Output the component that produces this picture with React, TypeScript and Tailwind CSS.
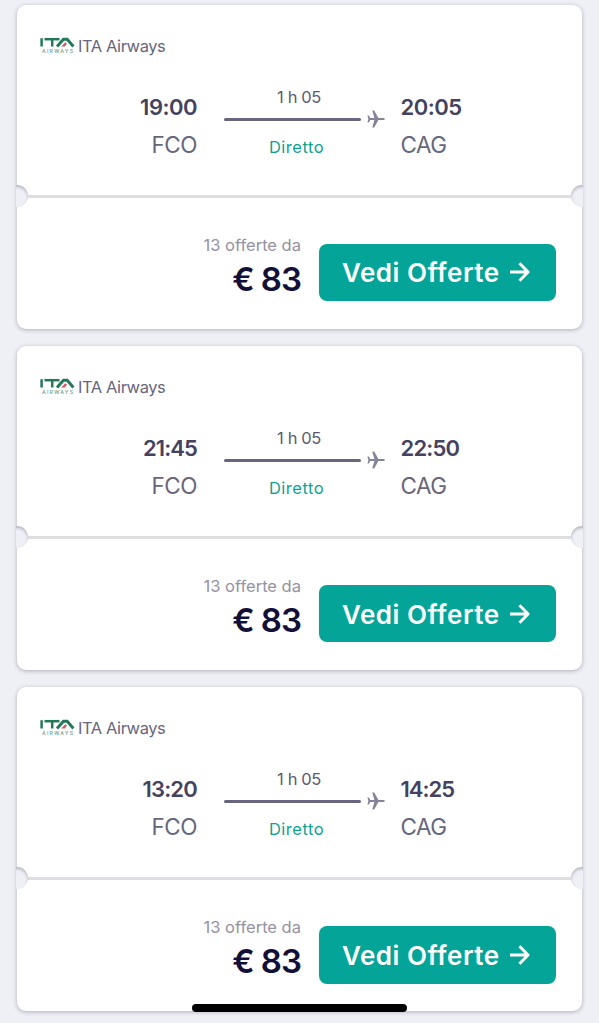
import React from 'react';

const flights = [
  { id: 1, departure: '19:00', arrival: '20:05', departureSpacing: 'tracking-[-0.5px]', arrivalSpacing: 'tracking-[-0.5px]' },
  { id: 2, departure: '21:45', arrival: '22:50', departureSpacing: 'tracking-[-0.9px]', arrivalSpacing: 'tracking-[-0.8px]' },
  { id: 3, departure: '13:20', arrival: '14:25', departureSpacing: 'tracking-[-0.8px]', arrivalSpacing: 'tracking-[-1px]' },
];

function ItaLogo() {
  return (
    <svg width="36" height="17" viewBox="0 0 36 17" className="shrink-0">
      <g fill="none" stroke="#23785a" strokeWidth="2.5">
        <path d="M2.6 1.2V9.5" />
        <path d="M5.5 2.2H20.5" />
        <path d="M13.2 2.5V9.5" />
        <path d="M18 9.5L24.5 2.2H28.2L34.4 9.5" strokeWidth="2.9" />
      </g>
      <path d="M22.3 9.5L26.3 5.3L28 6.5L25.8 9.5Z" fill="#d9545c" />
      <text x="3" y="16" textLength="31" fontSize="5.2" fontWeight="500" fill="#6aa08d" fontFamily="Inter, sans-serif">
        AIRWAYS
      </text>
    </svg>
  );
}

function Plane() {
  return (
    <svg width="18" height="18" viewBox="0 0 18 18" className="shrink-0" fill="#85839a">
      <path d="M17.8 9c0-.7-.6-1-1.4-1h-5L7.2.5H5.3L7.4 8H3.3L1.8 5.6H.4L1.4 9 .4 12.4h1.4L3.3 10h4.1l-2.1 7.5h1.9L11.4 10h5c.8 0 1.4-.3 1.4-1Z" />
    </svg>
  );
}

function Notch({ side }: { side: 'left' | 'right' }) {
  return (
    <div className={`absolute -top-[10px] h-[22px] w-[12px] overflow-hidden ${side === 'left' ? '-left-px' : '-right-px'}`}>
      <div
        className={`h-[22px] w-[22px] rounded-full bg-[#eff0f6] shadow-[inset_0_2px_3px_rgba(60,60,80,0.32)] ${
          side === 'left' ? '-ml-[10px]' : ''
        }`}
      />
    </div>
  );
}

type Flight = (typeof flights)[number];

function FlightCard({ flight }: { flight: Flight }) {
  return (
    <article className="h-[324px] shrink-0 rounded-[9px] bg-white shadow-[0_1px_4px_rgba(50,50,70,0.35)]">
      <div className="h-[190px] pt-[30.5px]">
        <div className="flex h-5 items-center gap-[3px] pl-[22px]">
          <ItaLogo />
          <span className="text-[16.5px] leading-5 tracking-[-0.42px] whitespace-nowrap text-[#68667c]">ITA Airways</span>
        </div>

        <div className="mt-[31.5px] flex h-[80px]">
          <div className="w-[180px] pt-[5px] text-right">
            <div className={`text-[22px] leading-[30px] font-semibold text-[#444260] ${flight.departureSpacing}`}>{flight.departure}</div>
            <div className="mt-[8px] text-[22.5px] leading-[30px] tracking-[-0.5px] text-[#68667c]">FCO</div>
          </div>
          <div className="ml-[26.5px] w-[161.5px]">
            <div className="w-[151px] text-center text-[16.5px] leading-[20px] tracking-[-0.4px] text-[#5b5971]">1 h 05</div>
            <div className="mt-[3px] flex h-[18px] items-center gap-[6px]">
              <div className="h-[3px] w-[137.5px] rounded-full bg-[#68667f]" />
              <Plane />
            </div>
            <div className="mt-[9px] w-[146px] text-center text-[16.5px] leading-[20px] tracking-[0.5px] text-[#0da391]">Diretto</div>
          </div>
          <div className="ml-[15.5px] pt-[5px]">
            <div className={`text-[22px] leading-[30px] font-semibold text-[#444260] ${flight.arrivalSpacing}`}>{flight.arrival}</div>
            <div className="mt-[8px] text-[22.5px] leading-[30px] tracking-[-0.5px] text-[#68667c]">CAG</div>
          </div>
        </div>
      </div>

      <div className="relative h-[3px] bg-[#dddde2]">
        <Notch side="left" />
        <Notch side="right" />
      </div>

      <div className="flex justify-end gap-[18px] pt-[37px] pr-[26.5px]">
        <div className="text-right whitespace-nowrap">
          <div className="text-[16.5px] leading-5 text-[#9492a3]">13 offerte da</div>
          <div className="text-[33px] leading-[48px] font-semibold tracking-[-1px] text-[#120f39]">€ 83</div>
        </div>
        <button className="mt-[8.7px] flex h-[57.6px] w-[236.5px] items-center gap-[10px] rounded-[8px] bg-[#04a598] pt-[2px] pl-[23px] whitespace-nowrap text-white">
          <span className="text-[26px] leading-8 font-semibold tracking-[0.52px]">Vedi Offerte</span>
          <svg width="20" height="20" viewBox="0 0 20 20" fill="none" stroke="currentColor" strokeWidth="3" className="relative -top-px shrink-0">
            <path d="M0 10H18M9.5 1.3L18 10L9.5 18.7" strokeLinejoin="round" />
          </svg>
        </button>
      </div>
    </article>
  );
}

export default function App() {
  return (
    <main className="relative h-[1023px] w-full overflow-hidden bg-[#eff0f6] px-[17px] pt-[5px] font-['Inter',sans-serif]">
      <div className="flex flex-col gap-[17.2px]">
        {flights.map((flight) => (
          <FlightCard key={flight.id} flight={flight} />
        ))}
      </div>
      {/* home indicator */}
      <div className="absolute top-[1004px] left-[192px] h-[7.5px] w-[215px] rounded-full bg-black" />
    </main>
  );
}
